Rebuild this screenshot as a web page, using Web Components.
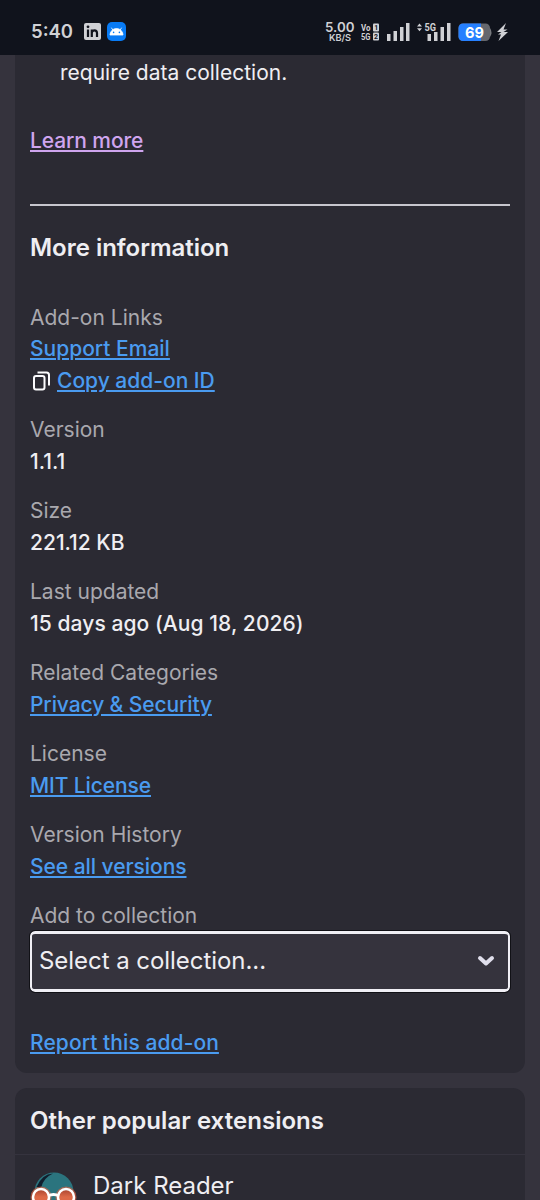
<!DOCTYPE html>
<html lang="en">
<head>
<meta charset="utf-8">
<title>Add-on details</title>
<style>
html,body{margin:0;height:1200px;overflow:hidden;background:#35333d}
body{font-family:Inter,"Noto Sans",sans-serif;color:#efeef2}
.tight{letter-spacing:-.1px}
.snug{letter-spacing:-.05px}
.loose{letter-spacing:.08px}
</style>
</head>
<body>
<phone-screen>
  <status-bar slot="status"></status-bar>
  <addon-card>
    <addon-note></addon-note>
    <h2>More information</h2>
    <info-list>
      <info-row label="Add-on Links"><text-link>Support Email</text-link><text-link icon>Copy add-on ID</text-link></info-row>
      <info-row label="Version">1.1.1</info-row>
      <info-row label="Size">221.12 KB</info-row>
      <info-row label="Last updated"><span class="loose">15 days ago (Aug 18, 2026)</span></info-row>
      <info-row label="Related Categories"><text-link class="tight">Privacy &amp; Security</text-link></info-row>
      <info-row label="License"><text-link class="tight">MIT License</text-link></info-row>
      <info-row label="Version History"><text-link class="snug">See all versions</text-link></info-row>
      <info-row label="Add to collection"><collection-select class="snug">Select a collection...</collection-select></info-row>
    </info-list>
    <text-link class="report loose">Report this add-on</text-link>
  </addon-card>
  <popular-card>Dark Reader</popular-card>
</phone-screen>
<script>
function define(name, html) {
  const template = document.createElement('template');
  template.innerHTML = html;
  customElements.define(name, class extends HTMLElement {
    constructor() {
      super();
      this.attachShadow({mode: 'open'}).append(template.content.cloneNode(true));
    }
    connectedCallback() {
      const label = this.shadowRoot.querySelector('.label');
      if (label) label.textContent = this.getAttribute('label');
    }
  });
}

define('phone-screen', `<style>
:host{display:flex;flex-direction:column;width:540px;height:1200px;overflow:hidden;background:#35333d}
main{display:flex;flex-direction:column;gap:15px;padding:0 15px;flex:1;min-height:0}
</style><slot name="status"></slot><main><slot></slot></main>`);

define('status-bar', `<style>
:host{display:flex;box-sizing:border-box;height:55px;flex:none;background:#10131c;color:#d0d1d5;padding:8px 32px 0 31px;align-items:center;font-weight:600}
.time{font-size:18.5px;width:53px;line-height:20px;position:relative;top:-1px}
svg{display:block;flex:none}
.app{margin-left:6px}
.right{margin-left:auto;display:flex;align-items:center}
</style>
<span class="time">5:40</span>
<svg width="17" height="17" viewBox="0 0 17 17"><rect width="17" height="17" rx="2" fill="#d0d1d5"/><path d="M4 6.5V14M7.8 14V6.5M7.8 10C7.8 6.4 13 6.4 13 10V14" fill="none" stroke="#10131c" stroke-width="2.2"/><circle cx="4" cy="3.8" r="1.4" fill="#10131c"/></svg>
<svg class="app" width="19" height="19" viewBox="0 0 19 19"><rect width="19" height="19" rx="5" fill="#087bf5"/><path d="M3 13a6.5 6.5 0 0 1 13 0zM5.8 8L4.4 5.7M13.2 8l1.400-2.300" fill="#fff" stroke="#fff" stroke-width=".8"/><circle cx="6.6" cy="10.4" r=".8" fill="#087bf5"/><circle cx="12.4" cy="10.4" r=".8" fill="#087bf5"/></svg>
<div class="right">
<svg width="183" height="24" viewBox="-36 0 183 24" fill="#d0d1d5" font-family="Roboto,sans-serif" font-weight="700">
<g font-family="Inter,sans-serif" font-weight="600"><text x="-36" y="12" font-size="13.500" textLength="29.500" lengthAdjust="spacingAndGlyphs">5.00</text>
<text x="-32" y="20.800" font-size="8.800" textLength="22" lengthAdjust="spacingAndGlyphs">KB/S</text></g>
<text x="0" y="10.500" font-size="9.500" textLength="9.500" lengthAdjust="spacingAndGlyphs">Vo</text>
<text x="0" y="19.800" font-size="9.500" textLength="9.500" lengthAdjust="spacingAndGlyphs">5G</text>
<rect x="12" y="3.500" width="6" height="8" rx="1"/><rect x="12" y="12.500" width="6" height="8" rx="1"/>
<text x="13.200" y="10" font-size="7" fill="#10131c">1</text><text x="13" y="19" font-size="7" fill="#10131c">2</text>
<path d="M26 14h3.500v7H26zM32.500 11H36v10h-3.500zM39 7h3.500v14H39zM45 3h3.500v18H45zM66.500 14H70v7h-3.500zM73 12h3.500v9H73zM79.500 7H83v14h-3.500zM86 3h3.500v18H86z"/>
<path d="M56 6.500l2.500-3 2.500 3zM56 8.300l2.500 3 2.500-3z"/>
<text x="63.500" y="10.500" font-size="10" textLength="11.500" lengthAdjust="spacingAndGlyphs">5G</text>
<path d="M129 8q3 4.500 0 9z" fill="#77797e"/>
<rect x="97.500" y="3.500" width="31.500" height="17.500" rx="4.500" fill="#65676d"/><path d="M102 3.500h18V21h-18a4.500 4.500 0 0 1-4.500-4.500V8a4.500 4.500 0 0 1 4.500-4.500z" fill="#2680ff"/>
<text x="104" y="18" font-size="15" fill="#fff" font-family="Inter,sans-serif" textLength="19" lengthAdjust="spacingAndGlyphs">69</text>
<path d="M145 3l-9 9h4.500l-3.500 2.500h3l-2.500 6.500 9.500-9h-4.500l4-2.500h-4z"/>
</svg></div>`);

define('addon-card', `<style>
:host{display:block;box-sizing:border-box;height:1018px;flex:none;background:#2b2a33;border-radius:0 0 12px 12px;padding:0 15px}
::slotted(h2){margin:27px 0 38.500px;font-size:24px;line-height:30px;font-weight:600;letter-spacing:-.02px}
::slotted(.report){margin-top:35px}
</style><slot></slot>`);

define('addon-note', `<style>
:host{display:block;border-bottom:2px solid #c7c6ce;height:149px;font-size:21px}
p{margin:0;padding:2px 0 0 30px;line-height:32px;height:34px}
a{display:block;margin-top:34px;line-height:32px;color:#cfa5ef;text-decoration:underline;text-decoration-thickness:2px;text-underline-offset:2px;font-weight:500;letter-spacing:-.1px}
</style><p>require data collection.</p><a>Learn more</a>`);

define('info-list', `<style>:host{display:flex;flex-direction:column;gap:18px}</style><slot></slot>`);

define('info-row', `<style>
:host{display:block;font-size:21px;line-height:31.5px;font-weight:500}
.label{color:#a9a8ae;font-weight:400}
</style><div class="label"></div><div><slot></slot></div>`);

define('text-link', `<style>
:host{display:flex;align-items:center;font-size:21px;line-height:31.5px;font-weight:500;color:#4a9bf0}
a{text-decoration:underline;text-decoration-thickness:2px;text-underline-offset:2px}
svg{display:none;margin:1px 6px 0 2px}
:host([icon]) svg{display:block}
</style><svg width="19" height="20" viewBox="0 0 19 20" fill="none" stroke="#fbfbfe" stroke-width="2"><rect x="2" y="5" width="10.500" height="13.500" rx="2"/><path d="M5.500 1.500h9a2.500 2.500 0 0 1 2.500 2.500v10.500"/></svg><a><slot></slot></a>`);

define('collection-select', `<style>
:host{display:flex;align-items:center;justify-content:space-between;box-sizing:border-box;height:61px;margin-top:-1px;border:solid #f0eff5;border-width:3px 2px;border-radius:5px;outline:1px solid #111116;background:#35333d;padding:0 13px 0 7px;font-size:24px;font-weight:400}
</style><span><slot></slot></span><svg width="18" height="12" viewBox="0 0 18 12"><path d="M3 3l6 5.500L15 3" fill="none" stroke="#e0dfec" stroke-width="4" stroke-linecap="round" stroke-linejoin="round"/></svg>`);

define('popular-card', `<style>
:host{display:block;height:300px;flex:none;background:#2b2a33;border-radius:12px 12px 0 0}
h2{margin:0;box-sizing:border-box;height:67px;padding:0 15px;font-size:24px;line-height:66px;font-weight:600;letter-spacing:.04px;border-bottom:1px solid #35333e}
.item{display:flex;padding:15px 15px;gap:15px;font-size:24px;line-height:31px}
svg{display:block}
</style><h2>Other popular extensions</h2><div class="item">
<svg width="48" height="48" viewBox="0 0 48 48"><defs><linearGradient id="lens" x2="0" y2="1"><stop offset="0" stop-color="#a8432f"/><stop offset=".5" stop-color="#dd6947"/></linearGradient></defs><circle cx="24" cy="22" r="19.500" fill="#2b747e"/><path d="M6.500 17Q12 4 23 3.500Q13 8 11 18z" fill="#101e2d"/><g fill="none" stroke="#e9633f" stroke-width="5" opacity=".6"><circle cx="11" cy="27" r="8"/><circle cx="36" cy="27" r="8"/></g><path d="M18 26q5.500-3 11 0" stroke="#fff" stroke-width="3" fill="none"/><g fill="url(#lens)" stroke="#fff" stroke-width="2.500"><circle cx="11" cy="27" r="8"/><circle cx="36" cy="27" r="8"/></g></svg>
<span><slot></slot></span></div>`);
</script>
</body>
</html>
